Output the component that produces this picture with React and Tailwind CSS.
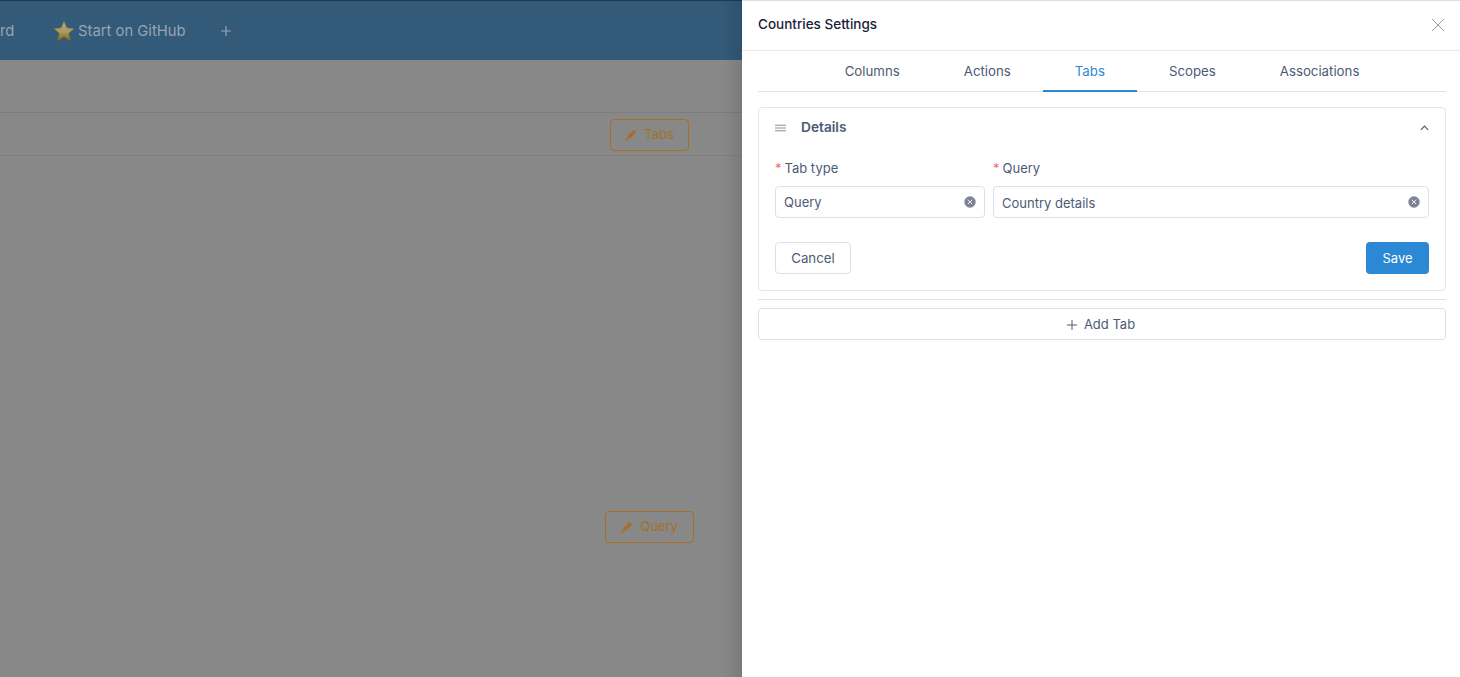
import React from "react";

function Pencil({ className }) {
  return (
    <svg viewBox="0 0 12 12" className={className} fill="currentColor">
      <path d="M8.7 0.7 11.3 3.3 4.3 10.3 1.7 7.7Z" />
      <path d="M1.1 8.5 3.5 10.9 0.2 11.8Z" />
    </svg>
  );
}

function Star() {
  return (
    <svg viewBox="0 0 22 22" className="w-[22px] h-[22px] shrink-0">
      <defs>
        <linearGradient id="star" x1="0" y1="0" x2="0" y2="1">
          <stop offset="0" stopColor="#a9a68a" />
          <stop offset="0.55" stopColor="#a89a63" />
          <stop offset="1" stopColor="#8c6a12" />
        </linearGradient>
      </defs>
      <path
        d="M11 1.2 14 7.9 21 8.6 15.7 13.3 17.3 20.4 11 16.7 4.7 20.4 6.3 13.3 1 8.6 8 7.9Z"
        fill="url(#star)"
        stroke="#8c7428"
        strokeWidth="0.6"
        strokeLinejoin="round"
      />
    </svg>
  );
}

function ClearIcon() {
  return (
    <svg viewBox="0 0 12 12" className="w-3 h-3 shrink-0">
      <circle cx="6" cy="6" r="5.7" fill="#7f8494" />
      <path d="M4 4 8 8M8 4 4 8" stroke="#fff" strokeWidth="1" strokeLinecap="round" opacity="0.85" />
    </svg>
  );
}

function EditButton({ label, width }) {
  return (
    <button className={`${width} h-8 flex items-center justify-center gap-[7px] border border-[#a86e22] rounded-[4px] text-[#a3702a] text-[13px]`}>
      <Pencil className="w-3 h-3" />
      <span>{label}</span>
    </button>
  );
}

function Field({ label, value, className, textClass }) {
  return (
    <div className={className}>
      <div className="h-[18px] pt-[2px] flex items-center text-[13px] text-[#4e5a75] mb-[9px]">
        <span className="text-[#f56c6c] mr-[3px]">*</span>
        {label}
      </div>
      <div className="h-8 border border-[#dcdfe6] rounded-[4px] bg-white flex items-center justify-between pl-2 pr-[8px]">
        <span className={`text-[13px] text-[#4e5a75] ${textClass}`}>{value}</span>
        <ClearIcon />
      </div>
    </div>
  );
}

const tabs = [
  ["Columns", false],
  ["Actions", false],
  ["Tabs", true],
  ["Scopes", false],
  ["Associations", false],
];

export default function App() {
  return (
    <div className="w-[1460px] h-[677px] flex overflow-hidden bg-white font-['Inter','Liberation_Sans',sans-serif]">
      <div className="relative w-[742px] shrink-0 h-full bg-[#888888] overflow-hidden">
        <header className="h-[60px] bg-[#335a78] border-t border-[#1d3a55] flex items-center text-[14.8px] text-[#97a5b2] whitespace-nowrap">
          <span className="-ml-[60px] w-[74px] pt-[1px] text-right -translate-x-[2px]">Dashboard</span>
          <div className="ml-[39px] flex items-center gap-[3px]">
            <Star />
            <span className="pt-[1px]">Start on GitHub</span>
          </div>
          <svg viewBox="0 0 12 12" className="ml-[34px] w-3 h-3" stroke="currentColor" strokeWidth="1.2">
            <path d="M6 1v10M1 6h10" />
          </svg>
        </header>
        <div className="h-[53px] border-b border-[#7c7c7c]" />
        <div className="h-[43px] border-b border-[#808080] flex items-center pt-[1px]">
          <div className="ml-auto w-[185px] flex justify-center">
            <EditButton label="Tabs" width="w-[79px]" />
          </div>
        </div>
        <div className="pt-[355px] flex">
          <div className="ml-auto w-[185px] flex justify-center">
            <EditButton label="Query" width="w-[89px]" />
          </div>
        </div>
        <div className="absolute top-0 bottom-0 right-0 w-5 bg-gradient-to-l from-black/10 to-transparent" />
      </div>

      <aside className="flex-1 h-full bg-white border-t border-[#dddddd]">
        <div className="h-[50px] border-b border-[#e8e8e8] flex items-center justify-between pl-4 pr-[15px] pb-[2px]">
          <h1 className="text-[13.5px] font-medium text-[#1a2238]">Countries Settings</h1>
          <svg viewBox="0 0 14 14" className="w-[14px] h-[14px]" stroke="#9a9da6" strokeWidth="1">
            <path d="M1 1 13 13M13 1 1 13" />
          </svg>
        </div>
        <div className="pl-4 pr-[14px]">
          <nav className="h-[41px] border-b border-[#e0e2e6] flex justify-center">
            {tabs.map(([t, active]) => (
              <div
                key={t}
                className={`h-[41px] px-8 pt-[2px] flex items-center text-[13.25px] border-b-2 ${active ? "border-[#2a88d4] text-[#2a88d4]" : "border-transparent text-[#4e5a75]"}`}
              >
                {t}
              </div>
            ))}
          </nav>
          <section className="mt-[15px] h-[184px] border border-[#e6e6e6] rounded-[4px] px-4">
            <div className="h-[39px] flex items-center">
              <svg viewBox="0 0 12 8" className="w-[11px] h-2" stroke="#7f8494" strokeWidth="1">
                <path d="M0 1h12M0 4h12M0 7h12" />
              </svg>
              <span className="ml-[15px] text-[13.7px] font-semibold text-[#4e5a75]">Details</span>
              <svg viewBox="0 0 10 6" className="ml-auto w-[9px] h-[6px]" fill="none" stroke="#4e5a75" strokeWidth="1.3">
                <path d="M1 5 5 1l4 4" />
              </svg>
            </div>
            <div className="pt-3 flex gap-2">
              <Field label="Tab type" value="Query" className="w-[210px]" textClass="pt-[2px]" />
              <Field label="Query" value="Country details" className="flex-1" textClass="pt-[3px]" />
            </div>
            <div className="mt-6 flex justify-between">
              <button className="w-[76px] h-8 pt-[2px] border border-[#dcdfe6] rounded-[4px] text-[13.3px] text-[#4e5a75]">Cancel</button>
              <button className="w-[63px] h-8 pt-[2px] rounded-[4px] bg-[#2a88d4] text-[13px] text-white">Save</button>
            </div>
          </section>
          <div className="mt-2 border-t border-[#e0e2e6]" />
          <button className="mt-2 w-full h-8 pt-[1px] border border-[#dcdfe6] rounded-[4px] flex items-center justify-center gap-[7px] text-[13px] text-[#4e5a75]">
            <svg viewBox="0 0 10 10" className="w-[10px] h-[10px] -ml-[2px]" stroke="currentColor" strokeWidth="1">
              <path d="M5 0v10M0 5h10" />
            </svg>
            Add Tab
          </button>
        </div>
      </aside>
    </div>
  );
}
